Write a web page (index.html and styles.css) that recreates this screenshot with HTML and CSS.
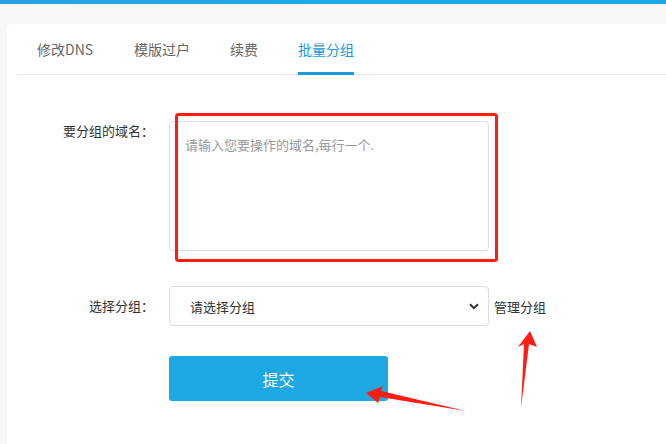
FILE: index.html
```html
<!DOCTYPE html>
<html lang="zh-CN">
<head>
<meta charset="utf-8">
<title>批量分组</title>
<link rel="stylesheet" href="styles.css">
</head>
<body>
<div class="topbar"></div>
<main class="main">
  <section class="card">
    <ul class="tabs">
      <li class="tab">修改DNS</li>
      <li class="tab">模版过户</li>
      <li class="tab">续费</li>
      <li class="tab active">批量分组</li>
    </ul>
    <form class="form">
      <label class="label label-top">要分组的域名：</label>
      <div class="field">
        <textarea class="textarea" placeholder="请输入您要操作的域名,每行一个."></textarea>
      </div>
      <label class="label label-mid">选择分组：</label>
      <div class="field field-row">
        <div class="select-wrap">
          <select class="select">
            <option>请选择分组</option>
          </select>
          <svg class="chev" width="10" height="7" viewBox="0 0 10 7"><path d="M1 1.2 L5 5.2 L9 1.2" fill="none" stroke="#333" stroke-width="2"/></svg>
        </div>
        <a class="manage">管理分组</a>
      </div>
      <div></div>
      <div class="field">
        <button type="button" class="btn">提交</button>
      </div>
    </form>
  </section>
</main>
<svg class="marks" width="666" height="444" viewBox="0 0 666 444">
  <rect x="176.5" y="114.5" width="320" height="146" rx="2" fill="none" stroke="#ff1c12" stroke-width="3"/>
  <polygon points="366,393 383,386 381,391 466,411 380,397 378,403" fill="#ff1c12"/>
  <polygon points="530,331 537,347 529,344 521,408 524,344 518,347" fill="#ff1c12"/>
</svg>
</body>
</html>
```
FILE: styles.css
```css
* { box-sizing: border-box; }
html, body { margin: 0; padding: 0; }
body {
  width: 666px;
  height: 444px;
  overflow: hidden;
  background: #f7f7f7;
  font-family: "Noto Sans CJK SC", "Noto Sans", sans-serif;
  color: #333;
  position: relative;
}
.topbar {
  height: 4px;
  background: linear-gradient(90deg, #2a9fdf, #21a9e8 50%, #1ea6e4);
}
.main {
  padding: 20px 0 0 7px;
  height: 440px;
}
.card {
  background: #fff;
  border-top-left-radius: 5px;
  height: 100%;
  padding-left: 10px;
}
.tabs {
  list-style: none;
  margin: 0;
  padding: 0;
  display: flex;
  border-bottom: 1px solid #e8e8e8;
}
.tab {
  font-size: 14px;
  line-height: 20px;
  color: #666;
  padding: 15px 0 13px;
  margin: 0 20px -1px;
  border-bottom: 3px solid transparent;
  white-space: nowrap;
}
.tab:nth-child(2) { margin-left: 21px; }
.tab.active {
  color: #1a9be0;
  border-bottom-color: #1a9be0;
}
.form {
  display: grid;
  grid-template-columns: 137px auto;
  column-gap: 15px;
  margin-top: 46px;
  align-items: center;
}
.label {
  font-size: 13px;
  line-height: 20px;
  color: #333;
  text-align: right;
  white-space: nowrap;
}
.label-top { align-self: start; }
.label-mid { margin-top: 35px; }
.field { display: flex; }
.field-row { align-items: center; margin-top: 35px; }
.textarea {
  width: 320px;
  height: 130px;
  border: 1px solid #ddd;
  border-radius: 4px;
  padding: 13px 15px;
  font-family: inherit;
  font-size: 13px;
  line-height: 20px;
  color: #333;
  resize: none;
  outline: none;
  display: block;
}
.textarea::placeholder { color: #999; }
.select-wrap { position: relative; }
.select {
  width: 320px;
  height: 40px;
  border: 1px solid #ddd;
  border-radius: 4px;
  background: #fff;
  padding: 0 0 0 20px;
  font-family: inherit;
  font-size: 13px;
  color: #333;
  appearance: none;
  -webkit-appearance: none;
  outline: none;
  display: block;
}
.chev {
  position: absolute;
  right: 10px;
  top: 17px;
}
.manage {
  font-size: 13px;
  color: #333;
  margin-left: 5px;
  white-space: nowrap;
}
.btn {
  margin-top: 30px;
  width: 219px;
  height: 45px;
  border: 0;
  border-radius: 3px;
  background: #1ea8e3;
  color: #fff;
  font-family: inherit;
  font-size: 16px;
}
.marks {
  position: absolute;
  left: 0;
  top: 0;
  pointer-events: none;
}
```
